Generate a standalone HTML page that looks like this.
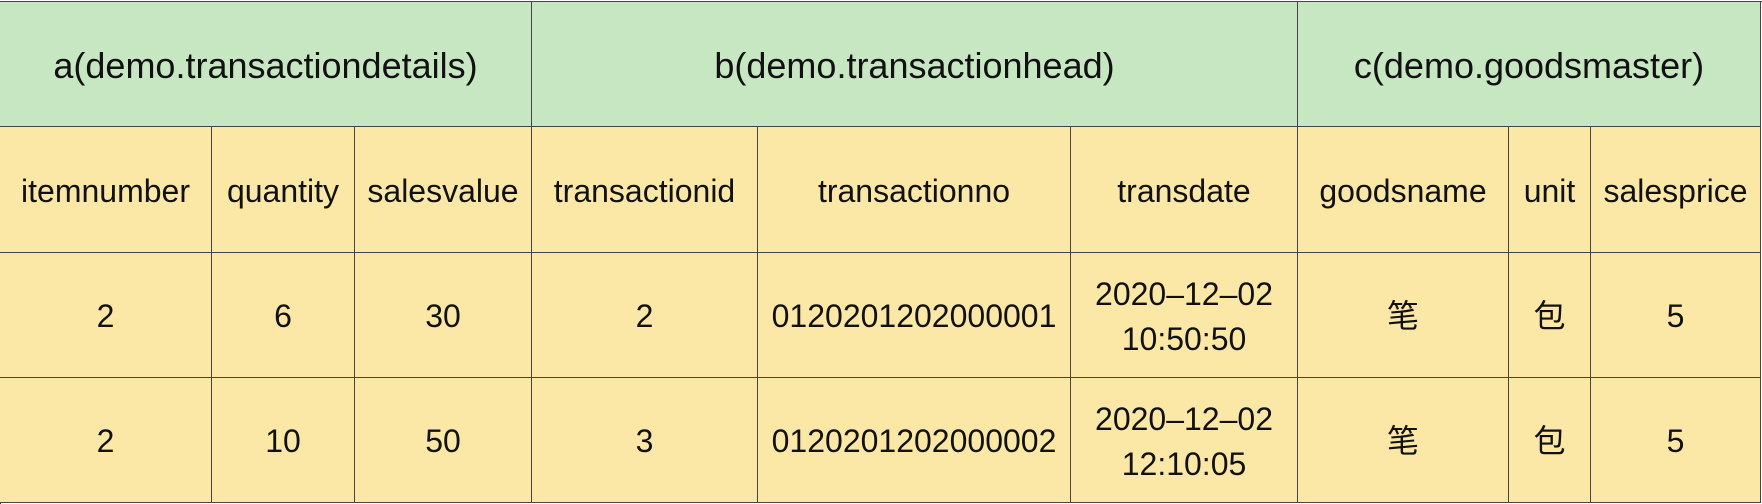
<!DOCTYPE html>
<html><head><meta charset="utf-8"><style>
body{margin:0;width:1762px;height:504px;overflow:hidden;background:#fff;font-family:"Liberation Sans","Noto Sans CJK SC",sans-serif;color:#111}
.c{position:absolute;box-sizing:border-box;border-right:1px solid #444;border-bottom:1px solid #444;display:flex;align-items:center;justify-content:center;text-align:center;font-size:32px;line-height:45px;background:#fbe8a6;padding-top:3px}
.g{background:#c7e6c2;font-size:36px}
</style></head><body>
<div style="position:absolute;left:0;top:1px;width:1762px;height:503px;border-top:1px solid #444;border-left:1px solid #444;box-sizing:border-box"></div>
<div class="c g" style="left:0;top:2px;width:532px;height:125px">a(demo.transactiondetails)</div>
<div class="c g" style="left:532px;top:2px;width:766px;height:125px">b(demo.transactionhead)</div>
<div class="c g" style="left:1298px;top:2px;width:463px;height:125px">c(demo.goodsmaster)</div>

<div class="c" style="left:0;top:127px;width:212px;height:126px">itemnumber</div>
<div class="c" style="left:212px;top:127px;width:143px;height:126px">quantity</div>
<div class="c" style="left:355px;top:127px;width:177px;height:126px">salesvalue</div>
<div class="c" style="left:532px;top:127px;width:226px;height:126px">transactionid</div>
<div class="c" style="left:758px;top:127px;width:313px;height:126px">transactionno</div>
<div class="c" style="left:1071px;top:127px;width:227px;height:126px">transdate</div>
<div class="c" style="left:1298px;top:127px;width:211px;height:126px">goodsname</div>
<div class="c" style="left:1509px;top:127px;width:82px;height:126px">unit</div>
<div class="c" style="left:1591px;top:127px;width:170px;height:126px">salesprice</div>

<div class="c" style="left:0;top:253px;width:212px;height:125px">2</div>
<div class="c" style="left:212px;top:253px;width:143px;height:125px">6</div>
<div class="c" style="left:355px;top:253px;width:177px;height:125px">30</div>
<div class="c" style="left:532px;top:253px;width:226px;height:125px">2</div>
<div class="c" style="left:758px;top:253px;width:313px;height:125px">0120201202000001</div>
<div class="c" style="left:1071px;top:253px;width:227px;height:125px">2020–12–02<br>10:50:50</div>
<div class="c" style="left:1298px;top:253px;width:211px;height:125px">笔</div>
<div class="c" style="left:1509px;top:253px;width:82px;height:125px">包</div>
<div class="c" style="left:1591px;top:253px;width:170px;height:125px">5</div>

<div class="c" style="left:0;top:378px;width:212px;height:125px">2</div>
<div class="c" style="left:212px;top:378px;width:143px;height:125px">10</div>
<div class="c" style="left:355px;top:378px;width:177px;height:125px">50</div>
<div class="c" style="left:532px;top:378px;width:226px;height:125px">3</div>
<div class="c" style="left:758px;top:378px;width:313px;height:125px">0120201202000002</div>
<div class="c" style="left:1071px;top:378px;width:227px;height:125px">2020–12–02<br>12:10:05</div>
<div class="c" style="left:1298px;top:378px;width:211px;height:125px">笔</div>
<div class="c" style="left:1509px;top:378px;width:82px;height:125px">包</div>
<div class="c" style="left:1591px;top:378px;width:170px;height:125px">5</div>
</body></html>
